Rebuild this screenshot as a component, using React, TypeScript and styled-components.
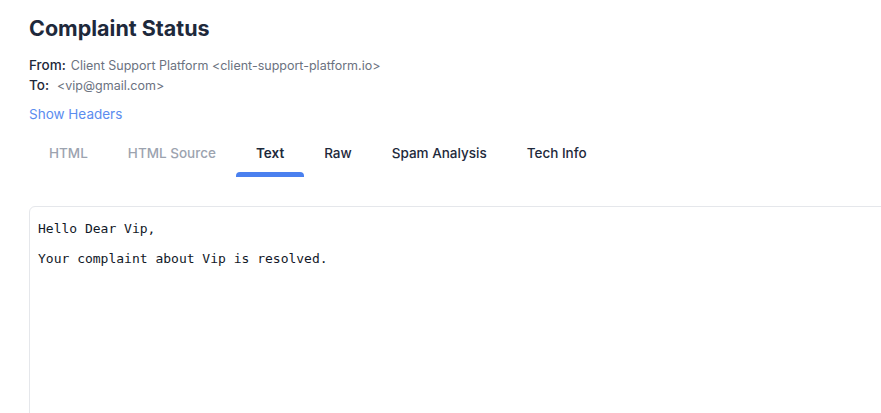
import React from 'react';
import styled, { createGlobalStyle } from 'styled-components';

const GlobalStyle = createGlobalStyle`
  html, body {
    margin: 0;
    padding: 0;
    background: #ffffff;
    overflow: hidden;
  }
  body {
    font-family: Inter, 'Noto Sans', sans-serif;
  }
`;

const Page = styled.div`
  padding: 13px 0 0 29px;
  display: flex;
  flex-direction: column;
`;

const Title = styled.h1`
  margin: 0;
  font-size: 21.5px;
  line-height: 30px;
  font-weight: 700;
  color: #1e293b;
`;

const Meta = styled.div`
  margin-top: 12px;
  display: flex;
  flex-direction: column;
`;

const MetaRow = styled.div`
  display: flex;
  align-items: baseline;
  gap: 5px;
  height: 20px;
  line-height: 20px;
`;

const MetaLabel = styled.span`
  font-size: 13.5px;
  font-weight: 500;
  color: #1e293b;
`;

const MetaValue = styled.span<{ $indent?: number }>`
  font-size: 12.5px;
  color: #6b7280;
  margin-left: ${(p) => p.$indent ?? 0}px;
`;

const HeadersLink = styled.a`
  margin-top: 10px;
  font-size: 13.5px;
  line-height: 18px;
  color: #5b8def;
  cursor: pointer;
  align-self: flex-start;
`;

const Tabs = styled.div`
  display: flex;
  margin-top: 12px;
`;

const Tab = styled.div<{ $state: 'muted' | 'active' | 'normal' }>`
  position: relative;
  padding: 9px 20px 0;
  height: 42px;
  box-sizing: border-box;
  font-size: 13.5px;
  line-height: 18px;
  font-weight: ${(p) => (p.$state === 'active' ? 600 : 500)};
  color: ${(p) => (p.$state === 'muted' ? '#9ca3af' : '#1e293b')};
  cursor: pointer;

  &::after {
    content: '';
    display: ${(p) => (p.$state === 'active' ? 'block' : 'none')};
    position: absolute;
    left: 0;
    right: 0;
    bottom: 0;
    height: 5px;
    border-radius: 4px 4px 0 0;
    background: #4a80ef;
  }
`;

const Body = styled.div`
  margin-top: 29px;
  margin-right: -8px;
  min-height: 320px;
  border: 1px solid #e5e7eb;
  border-radius: 6px;
  padding: 14px 8px;
`;

const Plain = styled.pre`
  margin: 0;
  font-family: 'DejaVu Sans Mono', monospace;
  font-size: 13px;
  line-height: 15px;
  color: #111827;
  white-space: pre-wrap;
`;

const tabs: { label: string; state: 'muted' | 'active' | 'normal' }[] = [
  { label: 'HTML', state: 'muted' },
  { label: 'HTML Source', state: 'muted' },
  { label: 'Text', state: 'active' },
  { label: 'Raw', state: 'normal' },
  { label: 'Spam Analysis', state: 'normal' },
  { label: 'Tech Info', state: 'normal' },
];

export default function App() {
  return (
    <>
      <GlobalStyle />
      <Page>
        <Title>Complaint Status</Title>
        <Meta>
          <MetaRow>
            <MetaLabel>From:</MetaLabel>
            <MetaValue>Client Support Platform &lt;client-support-platform.io&gt;</MetaValue>
          </MetaRow>
          <MetaRow>
            <MetaLabel>To:</MetaLabel>
            <MetaValue $indent={3}>&lt;vip@gmail.com&gt;</MetaValue>
          </MetaRow>
        </Meta>
        <HeadersLink>Show Headers</HeadersLink>
        <Tabs>
          {tabs.map((t) => (
            <Tab key={t.label} $state={t.state}>
              {t.label}
            </Tab>
          ))}
        </Tabs>
        <Body>
          <Plain>{'Hello Dear Vip,\n\nYour complaint about Vip is resolved.'}</Plain>
        </Body>
      </Page>
    </>
  );
}
